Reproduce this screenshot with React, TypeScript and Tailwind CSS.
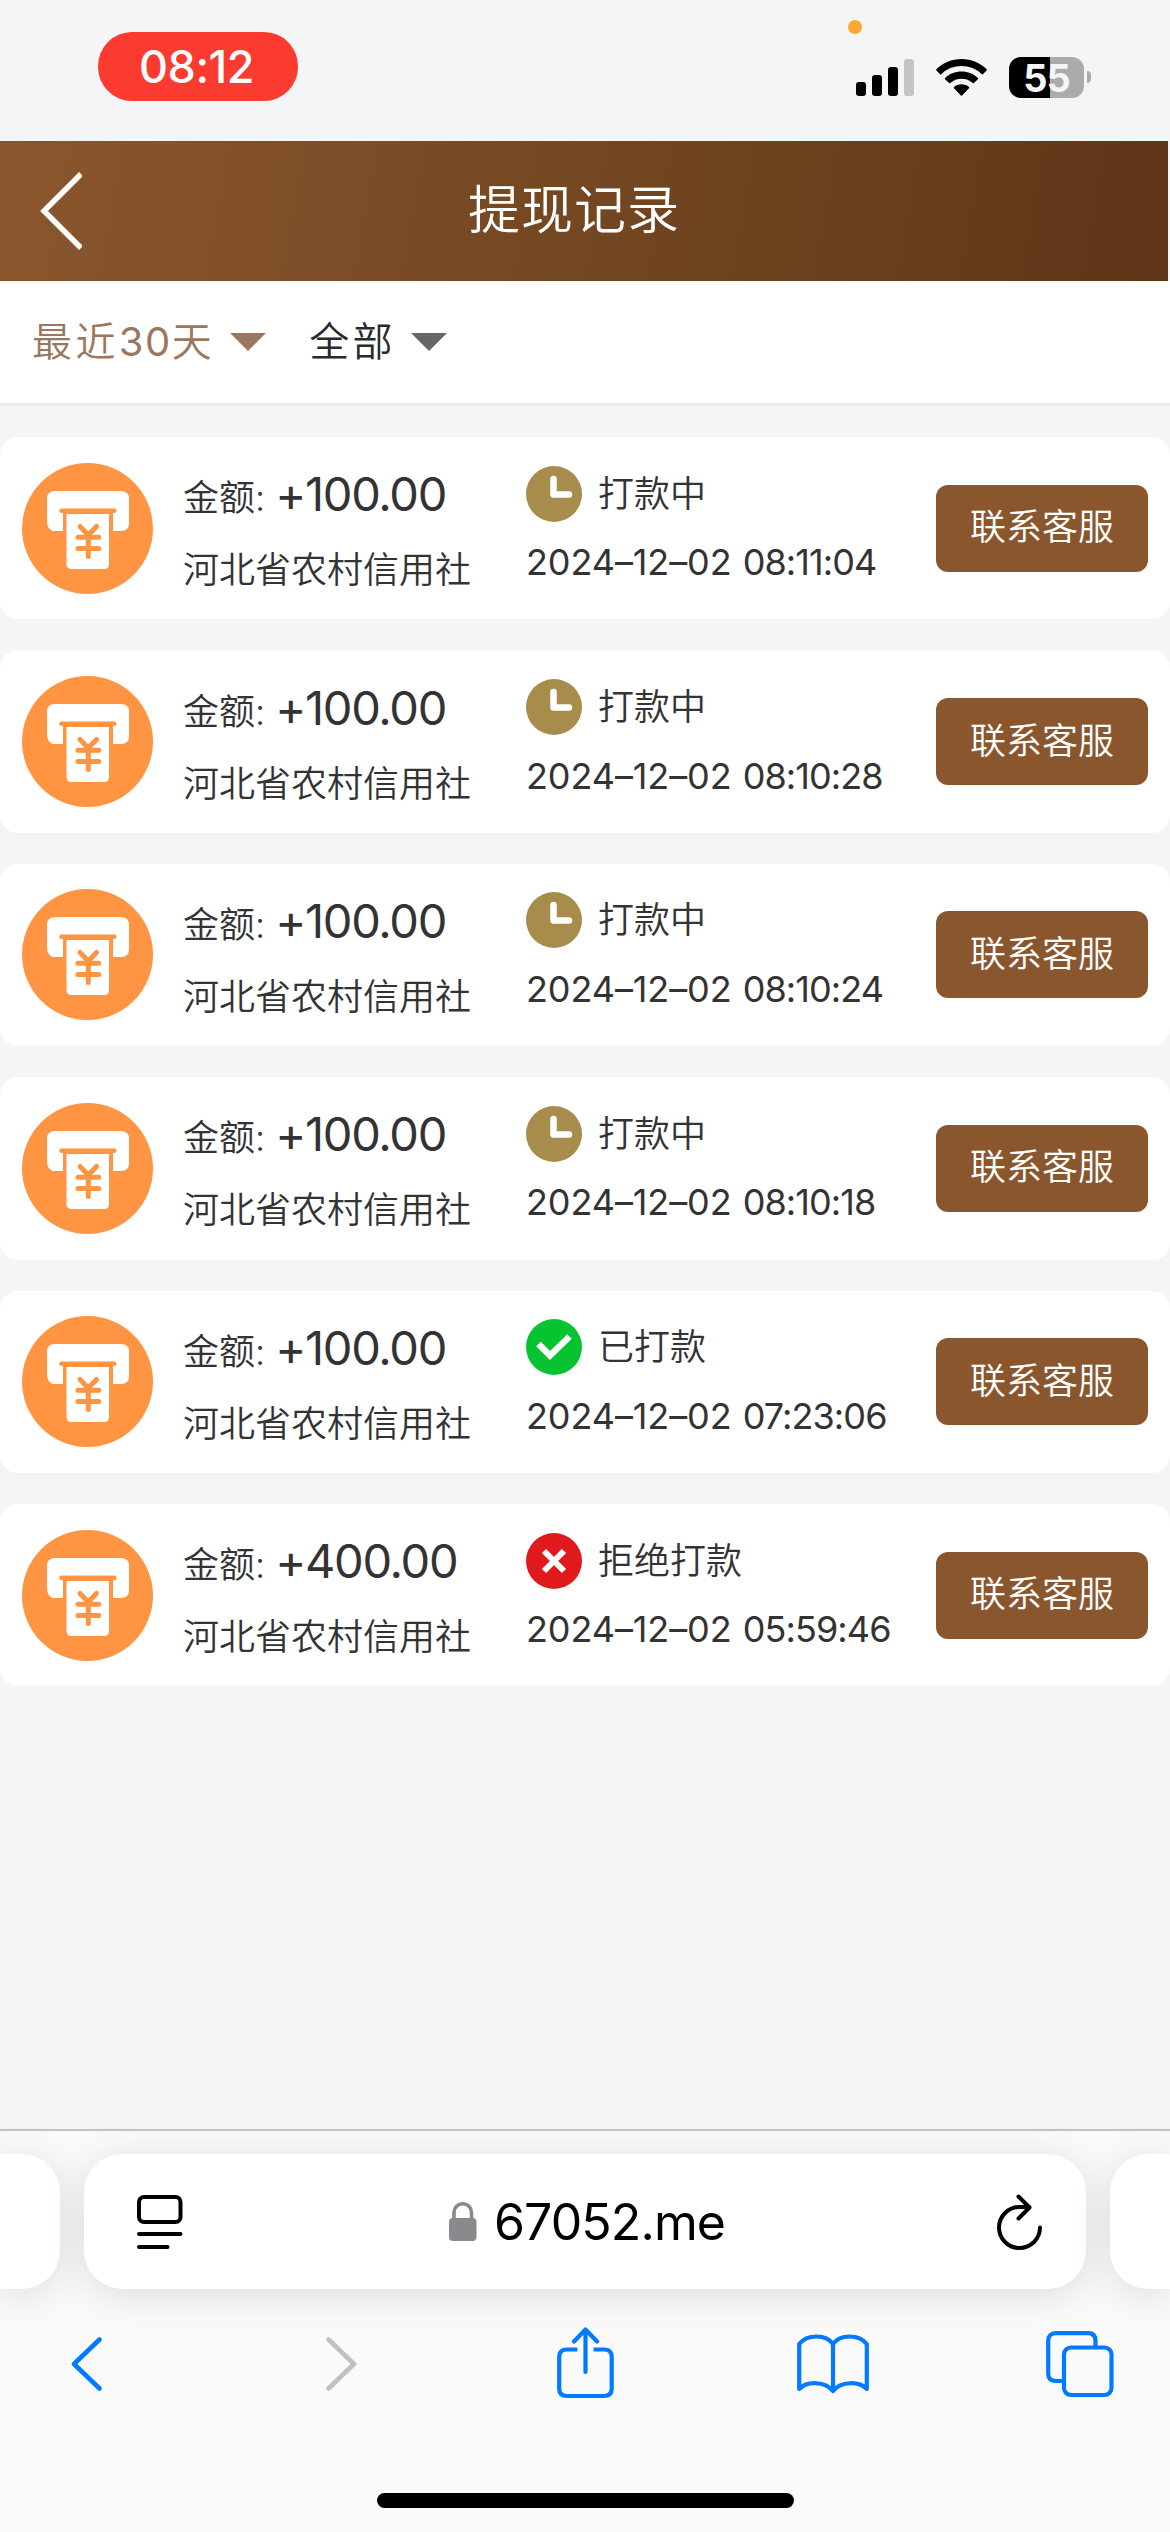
import React from "react";

type Status = "pending" | "paid" | "rejected";

const records: { amount: string; status: Status; label: string; date: string; time: string }[] = [
  { amount: "+100.00", status: "pending", label: "打款中", date: "2024–12–02", time: "08:11:04" },
  { amount: "+100.00", status: "pending", label: "打款中", date: "2024–12–02", time: "08:10:28" },
  { amount: "+100.00", status: "pending", label: "打款中", date: "2024–12–02", time: "08:10:24" },
  { amount: "+100.00", status: "pending", label: "打款中", date: "2024–12–02", time: "08:10:18" },
  { amount: "+100.00", status: "paid", label: "已打款", date: "2024–12–02", time: "07:23:06" },
  { amount: "+400.00", status: "rejected", label: "拒绝打款", date: "2024–12–02", time: "05:59:46" },
];

function StatusBar() {
  return (
    <div className="relative flex h-[141px] shrink-0 items-start justify-between pl-[98px] pr-[79px]">
      <div className="mt-8 flex h-[69px] w-[200px] items-center justify-center rounded-[34px] bg-[#fb3b30] pr-[3px] text-[45px] font-medium leading-none tracking-[-0.5px] text-white">
        08:12
      </div>
      <div className="absolute left-[848px] top-5 size-[14px] rounded-full bg-[#fea832]" />
      <div className="mt-[57px] flex h-[41px] items-start">
        <svg width="58" height="37" viewBox="0 0 58 37" className="mt-[2px]">
          <rect x="0" y="23" width="10" height="14" rx="3" />
          <rect x="16" y="16" width="10" height="21" rx="3" />
          <rect x="32" y="8" width="10" height="29" rx="3" />
          <rect x="48" y="0" width="10" height="37" rx="3" fill="#c3c4c5" />
        </svg>
        <svg width="51" height="37" viewBox="0 0 51 37" className="ml-[22px] mt-[2px]">
          <path d="M25.5 0C35.300 0 44.200 3.800 50.700 10.200Q51.200 10.800 50.700 11.300L47 15.200Q46.400 15.700 45.800 15.200A29 29 0 0 0 5.200 15.200Q4.600 15.700 4 15.200L0.300 11.300Q-0.200 10.800 0.300 10.200C6.800 3.800 15.700 0 25.500 0Z" />
          <path d="M25.500 12.600C31.800 12.600 37.600 15 41.900 19Q42.400 19.600 41.900 20.200L37.900 24.100Q37.400 24.600 36.800 24.100A17 17 0 0 0 14.200 24.100Q13.600 24.600 13.100 24.100L9.100 20.200Q8.600 19.600 9.100 19C13.400 15 19.200 12.600 25.500 12.600Z" />
          <path d="M25.500 25.300C28.400 25.300 31 26.300 33 28Q33.600 28.600 33 29.200L26.100 36.500Q25.500 37 24.900 36.500L18 29.200Q17.400 28.600 18 28C20 26.300 22.600 25.300 25.500 25.300Z" />
        </svg>
        <div className="ml-[22px] flex h-[41px] w-[75px] items-center justify-center rounded-[12px] bg-linear-to-r from-black from-[55%] to-[#ababab] to-[55%] text-[38px] font-bold leading-none tracking-[-1px] text-[#f3f5f7]">
          55
        </div>
        <div className="ml-[3px] mt-[14px] h-[12px] w-[4px] rounded-r-[6px] bg-[#ababab]" />
      </div>
    </div>
  );
}

function Header() {
  return (
    <header className="mr-[2px] flex h-[140px] shrink-0 items-center bg-linear-[100deg] from-[#8a562e] via-[#734721] to-[#5e3518]">
      <svg width="42" height="78" viewBox="0 0 42 78" className="ml-[40px]" fill="none" stroke="white" strokeWidth="5.500">
        <path d="M41 2L4 39L41 76" />
      </svg>
      <h1 className="ml-[386px] text-[52px] font-[350] leading-none tracking-[1px] text-white">提现记录</h1>
    </header>
  );
}

function Filters() {
  return (
    <div className="flex h-[125px] shrink-0 items-center border-b-[3px] border-[#e9ebec] bg-white pl-8 text-[40px] font-[350] leading-none tracking-[3.400px]">
      <span className="text-[#9a785f]">
        最近<span className="font-normal tracking-[1.500px]">30</span>天
      </span>
      <svg width="36" height="18" viewBox="0 0 36 18" className="ml-[15px]" fill="#9a785f">
        <path d="M0 0H36L18 18Z" />
      </svg>
      <span className="ml-[43px] text-[#2a2a2a]">全部</span>
      <svg width="36" height="18" viewBox="0 0 36 18" className="ml-[15px]" fill="#666">
        <path d="M0 0H36L18 18Z" />
      </svg>
    </div>
  );
}

function CashIcon() {
  return (
    <svg width="131" height="131" viewBox="0 0 131 131" className="shrink-0">
      <circle cx="65.500" cy="65.500" r="65.500" fill="#ff9442" />
      <path d="M33 28H99Q107 28 107 36V60Q107 68 99 68H91V47H41V68H31Q25 66 25 58V36Q25 28 33 28Z" fill="white" />
      <path d="M44.500 51H87V101Q87 106 82 106H49.500Q44.500 106 44.500 101Z" fill="white" />
      <path d="M39.500 47.800H92.300" stroke="#ff9442" strokeWidth="4.600" strokeLinecap="round" />
      <path d="M58 63.500L66.300 72L74.500 63.500M56 74.300H76.700M56 85.500H76.700M66.300 72V93.500" fill="none" stroke="#ff9442" strokeWidth="5" strokeLinecap="round" strokeLinejoin="round" />
    </svg>
  );
}

function StatusIcon({ status }: { status: Status }) {
  if (status === "pending") {
    return (
      <svg width="56" height="56" viewBox="0 0 56 56">
        <circle cx="28" cy="28" r="28" fill="#a78c4b" />
        <path d="M27.500 13V28.500H43" fill="none" stroke="white" strokeWidth="6.500" strokeLinecap="round" strokeLinejoin="round" />
      </svg>
    );
  }
  if (status === "paid") {
    return (
      <svg width="56" height="56" viewBox="0 0 56 56">
        <circle cx="28" cy="28" r="28" fill="#05c430" />
        <path d="M12.500 25L24 36.500L43.500 17.500" fill="none" stroke="white" strokeWidth="6.500" />
      </svg>
    );
  }
  return (
    <svg width="56" height="56" viewBox="0 0 56 56">
      <circle cx="28" cy="28" r="28" fill="#e0191c" />
      <path d="M18 18L38 38M38 18L18 38" fill="none" stroke="white" strokeWidth="6" />
    </svg>
  );
}

function RecordCard({ record }: { record: (typeof records)[number] }) {
  return (
    <article className="flex h-[182.400px] shrink-0 items-center rounded-[18px] bg-white px-[22px] text-[36px] font-[350] text-[#333]">
      <CashIcon />
      <div className="ml-[30px] flex w-[343px] flex-col whitespace-nowrap pt-1">
        <div className="flex h-[64px] items-baseline leading-[61px]">
          <span>金额:</span>
          <span className="ml-[10px] text-[47px] font-normal tracking-[-1.300px]">{record.amount}</span>
        </div>
        <div className="mt-[14px] h-[56px] leading-[58px]">河北省农村信用社</div>
      </div>
      <div className="flex grow flex-col whitespace-nowrap">
        <div className="flex h-[56px] items-center pb-px leading-none">
          <StatusIcon status={record.status} />
          <span className="ml-4">{record.label}</span>
        </div>
        <div className="mt-3 h-[56px] font-normal leading-[57px] tracking-[-0.100px]">
          {record.date} <span className="ml-[1px] tracking-[-0.900px]">{record.time}</span>
        </div>
      </div>
      <button className="flex h-[87px] w-[212px] shrink-0 items-center justify-center rounded-[12px] bg-[#8a562e] pb-[2px] leading-none text-white">
        联系客服
      </button>
    </article>
  );
}

function BrowserBar() {
  return (
    <footer className="flex h-[403px] shrink-0 flex-col overflow-hidden border-t-[2px] border-[#bfc1c3] bg-[#fafafa]">
      <div className="mt-[23px] flex h-[135px] shrink-0 gap-6">
        <div className="w-[60px] rounded-r-[38px] bg-white shadow-[0_6px_40px_rgba(0,0,0,0.12)]" />
        <div className="flex w-[1002px] items-center rounded-[38px] bg-white pl-[53px] pr-[43px] shadow-[0_6px_40px_rgba(0,0,0,0.12)]">
          <svg width="46" height="54" viewBox="0 0 46 54" fill="none" stroke="black" strokeWidth="4" strokeLinecap="round">
            <rect x="2" y="2" width="41.500" height="25" rx="5" />
            <path d="M2 39H43.500M2 52H30.500" />
          </svg>
          <svg width="28" height="39" viewBox="0 0 28 39" className="ml-[266px]">
            <rect x="0" y="16" width="27.500" height="23" rx="4" fill="#8a898e" />
            <path d="M5 18V10.500A8.700 8.700 0 0 1 22.500 10.500V18" fill="none" stroke="#8a898e" strokeWidth="3.600" />
          </svg>
          <span className="ml-[17px] w-[380px] text-[50px] leading-none tracking-[-0.900px] text-black">67052.me</span>
          <svg width="46" height="56" viewBox="0 0 46 56" className="ml-auto" fill="none" stroke="black" strokeWidth="4" strokeLinecap="round" strokeLinejoin="round">
            <path d="M43 33.500A20.500 20.500 0 1 1 22.500 13H32.500M21.500 2.500L32.500 13.500L21.500 24.500" />
          </svg>
        </div>
        <div className="w-[60px] rounded-l-[38px] bg-white shadow-[0_6px_40px_rgba(0,0,0,0.12)]" />
      </div>
      <nav className="mt-[37px] flex h-[76px] shrink-0 items-center pl-[71px] pr-[56px] text-[#007aff]">
        <svg width="31" height="54" viewBox="0 0 31 54" fill="none" stroke="currentColor" strokeWidth="4.600" strokeLinecap="round" strokeLinejoin="round">
          <path d="M28.500 2.500L3 27L28.500 51.500" />
        </svg>
        <svg width="31" height="54" viewBox="0 0 31 54" className="ml-[224px] text-[#c1c1c2]" fill="none" stroke="currentColor" strokeWidth="4.600" strokeLinecap="round" strokeLinejoin="round">
          <path d="M2.500 2.500L28 27L2.500 51.500" />
        </svg>
        <svg width="58" height="72" viewBox="0 0 58 72" className="mb-[3px] ml-[200px]" fill="none" stroke="currentColor" strokeWidth="4.200" strokeLinejoin="round">
          <path d="M20.500 22.500H10Q2.200 22.500 2.200 30V61.500Q2.200 69 10 69H47Q54.700 69 54.700 61.500V30Q54.700 22.500 47 22.500H36.500" />
          <path d="M28.500 45V3M17 14.500L28.500 2.500L40 14.500" strokeLinecap="round" />
        </svg>
        <svg width="72" height="60" viewBox="0 0 72 60" className="ml-[182px]" fill="none" stroke="currentColor" strokeWidth="4.200" strokeLinecap="round" strokeLinejoin="round">
          <path d="M36 10V57M36 10C29 0 10 0 2.200 10V55C10 47 28 47 36 57C44 47 62 47 69.800 55V10C62 0 43 0 36 10Z" />
        </svg>
        <svg width="68" height="67" viewBox="0 0 68 67" className="ml-auto" fill="none" stroke="currentColor" strokeWidth="4.200">
          <path d="M16 50H10Q2.200 50 2.200 42.500V10Q2.200 2.200 10 2.200H42Q49.500 2.200 49.500 10V15" />
          <rect x="18" y="16.500" width="47.500" height="47.500" rx="7" />
        </svg>
      </nav>
      <div className="mx-auto mt-auto mb-6 h-[15px] w-[417px] shrink-0 rounded-full bg-black" />
    </footer>
  );
}

export default function App() {
  return (
    <div className="flex h-[2532px] w-[1170px] flex-col overflow-hidden bg-[#f3f5f7] font-['Inter','Noto_Sans_CJK_SC',sans-serif]">
      <StatusBar />
      <Header />
      <Filters />
      <main className="flex grow flex-col gap-[31px] pt-[31px]">
        {records.map((record, i) => (
          <RecordCard key={i} record={record} />
        ))}
      </main>
      <BrowserBar />
    </div>
  );
}
